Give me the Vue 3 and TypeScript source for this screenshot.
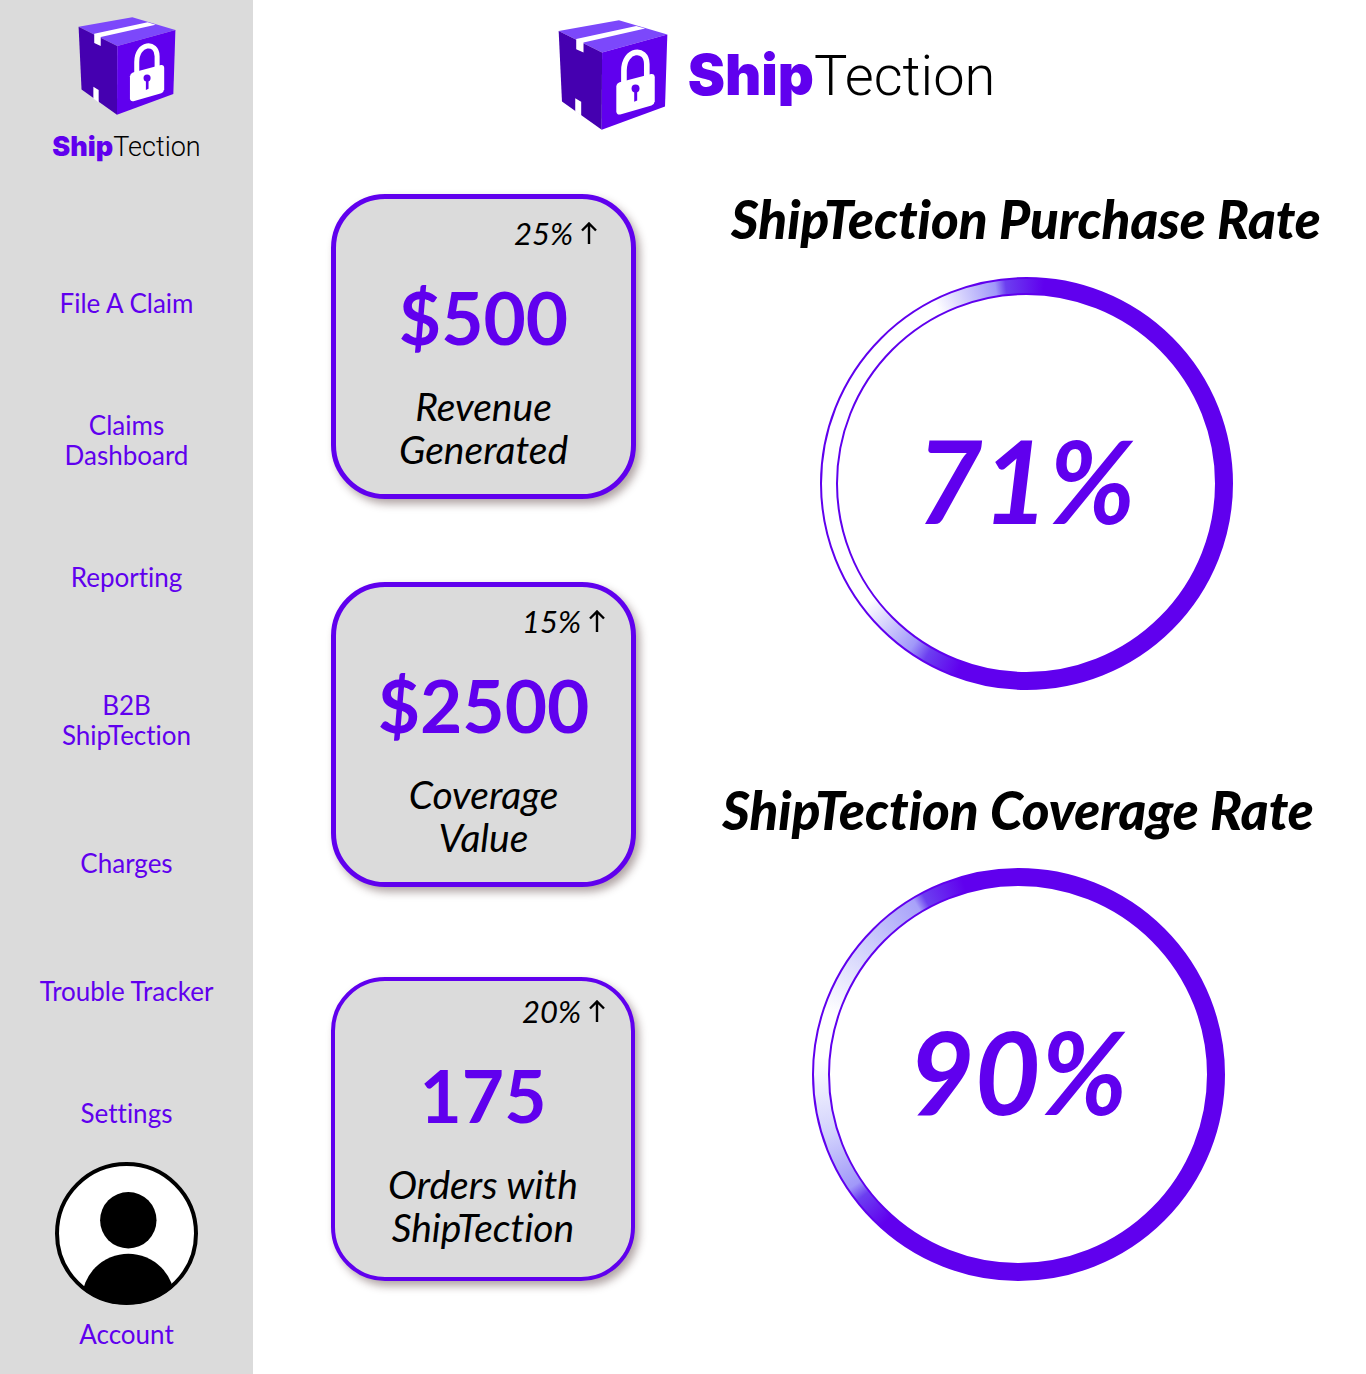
<script setup lang="ts">
import { h } from 'vue'

interface Stat {
  trend: string
  value: string
  label: string[]
  variant: string
}

interface Gauge {
  title: string
  value: string
  kind: string
}

const navGroups: { kind: string; items: string[][] }[] = [
  { kind: 'claims', items: [['File A Claim'], ['Claims', 'Dashboard'], ['Reporting']] },
  { kind: 'business', items: [['B2B', 'ShipTection'], ['Charges'], ['Trouble Tracker']] },
  { kind: 'user', items: [['Settings']] },
]

const stats: Stat[] = [
  { trend: '25%', value: '$500', label: ['Revenue', 'Generated'], variant: 'revenue' },
  { trend: '15%', value: '$2500', label: ['Coverage', 'Value'], variant: 'coverage' },
  { trend: '20%', value: '175', label: ['Orders with', 'ShipTection'], variant: 'orders' },
]

const gauges: Gauge[] = [
  { title: 'ShipTection Purchase Rate', value: '71%', kind: 'purchase' },
  { title: 'ShipTection Coverage Rate', value: '90%', kind: 'coverage' },
]

// Parcel with a padlock, shared by the sidebar and the page header
const BoxLogo = () =>
  h('svg', { viewBox: '27 29 330 332', 'aria-hidden': 'true' }, [
    h('path', { d: 'M28 62 210 30 356 73 159 127Z', fill: '#7c48fb' }),
    h('path', { d: 'M28 62 159 127 158 360 38 275Z', fill: '#4500b0' }),
    h('path', { d: 'M159 127 356 73 349 290 158 360Z', fill: '#6000ee' }),
    h('path', { d: 'M81 86 262 47 289 55 103 97V127L81 117Z', fill: '#fff' }),
    h('path', { d: 'M78 265 96 276V319L78 305Z', fill: '#fff' }),
    h('path', {
      d: 'M225 222V182C225 115 294 110 294 162V206',
      fill: 'none',
      stroke: '#fff',
      'stroke-width': '17',
    }),
    h('path', {
      d: 'M212 217 307 192Q318 191 318 202V274Q317 283 308 287L214 314Q203 316 202 305V230Q203 220 212 217Z',
      fill: '#fff',
    }),
    h('circle', { cx: 260, cy: 236, r: 12, fill: '#6000ee' }),
    h('path', { d: 'M256 240H265V272L256 276Z', fill: '#6000ee' }),
  ])
</script>

<template>
  <div class="page">
    <aside class="sidebar">
      <a href="#" class="brand brand-side">
        <BoxLogo class="brand-box" />
        <span class="brand-name"><b>Ship</b>Tection</span>
      </a>
      <nav class="nav">
        <ul v-for="group in navGroups" :key="group.kind" class="nav-group" :class="group.kind">
          <li v-for="item in group.items" :key="item[0]">
            <a href="#" class="nav-link">
              <span v-for="line in item" :key="line" class="line">{{ line }}</span>
            </a>
          </li>
        </ul>
      </nav>
      <a href="#" class="nav-link account">
        <svg class="avatar" viewBox="0 0 143 143" aria-hidden="true">
          <defs>
            <clipPath id="avatar-clip"><circle cx="71.5" cy="71.5" r="71" /></clipPath>
          </defs>
          <circle cx="71.5" cy="71.5" r="69.5" fill="#fff" stroke="#000" stroke-width="4" />
          <circle cx="73.3" cy="58.3" r="28.2" />
          <circle cx="73.3" cy="138" r="46.3" clip-path="url(#avatar-clip)" />
        </svg>
        <span class="line">Account</span>
      </a>
    </aside>

    <main class="main">
      <header class="header">
        <a href="#" class="brand brand-top">
          <BoxLogo class="brand-box" />
          <span class="brand-name"><b>Ship</b>Tection</span>
        </a>
      </header>
      <div class="content">
        <section class="stats">
          <article v-for="stat in stats" :key="stat.value" class="card" :class="stat.variant">
            <p class="trend">
              {{ stat.trend }}
              <svg class="arrow" viewBox="0 0 16 22" aria-label="up">
                <path d="M8 22V2M1 8.500 8 1.500 15 8.500" fill="none" stroke="#000" stroke-width="2.400" />
              </svg>
            </p>
            <p class="value">{{ stat.value }}</p>
            <h2 class="label">
              <span v-for="line in stat.label" :key="line" class="line">{{ line }}</span>
            </h2>
          </article>
        </section>
        <section class="gauges">
          <figure v-for="gauge in gauges" :key="gauge.kind" class="gauge" :class="gauge.kind">
            <figcaption class="gauge-title">{{ gauge.title }}</figcaption>
            <div class="ring">
              <div class="ring-hole">{{ gauge.value }}</div>
            </div>
          </figure>
        </section>
      </div>
    </main>
  </div>
</template>

<style>
body {
  margin: 0;
  background: #fff;
}
</style>

<style scoped>
.page {
  --brand: #6000ee;
  --panel: #dbdbdb;
  display: flex;
  min-height: 100vh;
  color: #000;
  font-family: Lato, 'Noto Sans', sans-serif;
  font-variant-ligatures: none;
}

.page * {
  box-sizing: border-box;
}

a {
  color: inherit;
  text-decoration: none;
}

.line {
  display: block;
}

.sidebar {
  flex: 0 0 253px;
  display: flex;
  flex-direction: column;
  align-items: center;
  padding: 17px 0 24px;
  background: var(--panel);
}

.brand {
  display: flex;
  align-items: center;
}

.brand-name {
  font-family: Roboto, 'Liberation Sans', sans-serif;
  font-weight: 300;
  white-space: nowrap;
}

.brand-name b {
  color: var(--brand);
  font-family: Inter, 'Liberation Sans', sans-serif;
  font-weight: 900;
}

.brand-side {
  flex-direction: column;
  gap: 16px;
}

.brand-side .brand-box {
  width: 98px;
  height: 98px;
}

.brand-side .brand-name {
  font-size: 27px;
  line-height: 32px;
}

.nav {
  padding-top: 125px;
}

.nav-group {
  display: flex;
  flex-direction: column;
  gap: 92px;
  margin: 0;
  padding: 0;
  list-style: none;
}

.nav-group.business {
  gap: 98px;
  padding: 98px 0 92px;
}

.nav-link {
  display: block;
  color: var(--brand);
  font-size: 26px;
  line-height: 30px;
  text-align: center;
}

.account {
  padding-top: 34px;
}

.avatar {
  display: block;
  width: 143px;
  height: 143px;
  margin-bottom: 14px;
}

.main {
  flex: 1;
  min-width: 0;
  padding: 20px 40px 40px 78px;
}

.header {
  display: flex;
  justify-content: center;
  padding-right: 104px;
}

.brand-top {
  gap: 20px;
}

.brand-top .brand-box {
  width: 110px;
  height: 110px;
}

.brand-top .brand-name {
  font-size: 56px;
  line-height: 64px;
}

.content {
  display: flex;
  justify-content: space-between;
  padding-top: 64px;
}

.stats {
  display: flex;
  flex-direction: column;
  gap: 83px;
}

.card {
  width: 305px;
  height: 305px;
  padding: 16px 0 0;
  border: 5px solid var(--brand);
  border-radius: 54px;
  background: var(--panel);
  box-shadow: 4px 5px 8px rgba(60, 30, 30, 0.4);
  text-align: center;
}

.card.orders {
  width: 304px;
  height: 304px;
  margin-top: 7px;
  padding-top: 12px;
  border-width: 4px;
}

.trend {
  display: flex;
  justify-content: flex-end;
  align-items: center;
  gap: 8px;
  margin: 0;
  padding-right: 26px;
  font-size: 31px;
  font-style: italic;
  line-height: 36px;
}

.revenue .trend {
  padding-right: 34px;
}

.arrow {
  width: 16px;
  height: 22px;
}

.value {
  margin: 0;
  padding-top: 24px;
  color: var(--brand);
  font-size: 73px;
  font-weight: 700;
  line-height: 84px;
}

.label {
  margin: 0;
  padding-top: 26px;
  font-size: 39px;
  font-style: italic;
  font-weight: 400;
  line-height: 43px;
}

.gauges {
  display: flex;
  flex-direction: column;
  align-items: flex-end;
  gap: 95px;
}

.gauge {
  display: flex;
  flex-direction: column;
  align-items: center;
  gap: 33px;
  margin: 0;
}

.gauge.purchase {
  min-width: 600px;
}

.gauge.coverage {
  min-width: 616px;
}

.gauge-title {
  font-size: 53px;
  font-style: italic;
  font-weight: 900;
  line-height: 50px;
  white-space: nowrap;
}

.ring {
  display: grid;
  width: 413px;
  height: 413px;
  padding: 14px;
  border: 2px solid var(--brand);
  border-radius: 50%;
}

.purchase .ring {
  background: conic-gradient(
    from 5deg, #6000ee 195deg, #6c3ff0 205deg, #a098f9 210deg, #fff 228deg,
    #fff 328deg, #a098f9 346deg, #6c3ff0 349deg, #6000ee 360deg
  ) border-box;
}

.coverage .ring {
  background: conic-gradient(
    #6000ee 222deg, #6c3ff0 232deg, #a098f9 236deg, #d0d0fc 252deg, #fff 275deg,
    #fff 288deg, #d0d0fc 310deg, #a8a2f9 329deg, #6c3ff0 332deg, #6000ee 344deg
  ) border-box;
}

.ring-hole {
  display: grid;
  place-items: center;
  padding-bottom: 8px;
  border: 2px solid var(--brand);
  border-radius: 50%;
  background: #fff;
  color: var(--brand);
  font-size: 114px;
  font-style: italic;
  font-weight: 700;
  line-height: 120px;
}
</style>
